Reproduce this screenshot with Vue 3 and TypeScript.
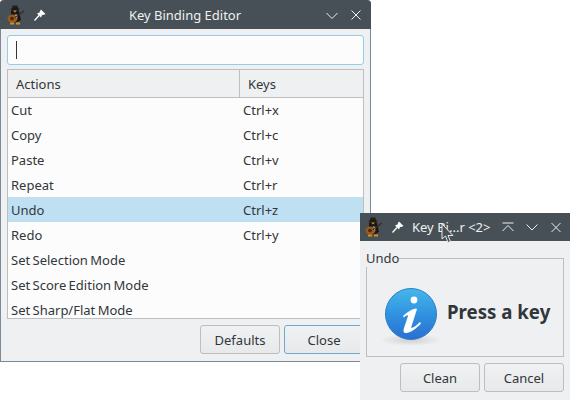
<template>
  <div class="desktop">
    <section class="window editor">
      <header class="titlebar">
        <TuxIcon />
        <PinIcon />
        <span class="title">Key Binding Editor</span>
        <svg class="ctl" width="14" height="14" viewBox="0 0 14 14"><path d="M1.500 5 7 10.500 12.500 5" /></svg>
        <svg class="ctl close" width="14" height="14" viewBox="0 0 14 14"><path d="M2.500 2.500l9 9M11.500 2.500l-9 9" /></svg>
      </header>
      <div class="editor-body">
        <div class="search"><span class="caret"></span></div>
        <div class="table">
          <div class="thead">
            <div class="th actions">Actions</div>
            <div class="th">Keys</div>
          </div>
          <div class="tbody">
            <div
              v-for="row in rows"
              :key="row.action"
              class="row"
              :class="{ selected: row.action === 'Undo' }"
            >
              <span class="action">{{ row.action }}</span>
              <span>{{ row.keys }}</span>
            </div>
          </div>
        </div>
        <footer class="buttons">
          <button class="btn">Defaults</button>
          <button class="btn focused">Close</button>
        </footer>
      </div>
    </section>

    <section class="window prompt">
      <header class="titlebar small">
        <TuxIcon />
        <PinIcon />
        <span class="title-left">Key Bi...r &lt;2&gt;</span>
        <svg class="ctl" width="14" height="14" viewBox="0 0 14 14"><path d="M1.500 3h11M1.500 11 7 5.500 12.500 11" /></svg>
        <svg class="ctl" width="14" height="14" viewBox="0 0 14 14"><path d="M1.500 4.500 7 10l5.500-5.500" /></svg>
        <svg class="ctl" width="14" height="14" viewBox="0 0 14 14"><path d="M2.500 3l9 9M11.500 3l-9 9" /></svg>
      </header>
      <div class="prompt-body">
        <fieldset class="group">
          <legend>Undo</legend>
          <div class="message">
            <svg class="info" width="64" height="64" viewBox="0 0 64 64">
              <defs>
                <linearGradient id="ball" x1="0" y1="0" x2="0" y2="1">
                  <stop offset="0" stop-color="#45b7ea" />
                  <stop offset="0.55" stop-color="#2f8fe0" />
                  <stop offset="1" stop-color="#2a6fd0" />
                </linearGradient>
                <radialGradient id="shade">
                  <stop offset="0" stop-color="#000" stop-opacity="0.14" />
                  <stop offset="1" stop-color="#000" stop-opacity="0" />
                </radialGradient>
              </defs>
              <ellipse cx="32" cy="56" rx="31" ry="6" fill="url(#shade)" />
              <circle cx="32" cy="30" r="25.500" fill="url(#ball)" stroke="#2e7fc8" />
              <ellipse cx="35" cy="16" rx="3.400" ry="3.400" fill="#fff" />
              <path
                d="M24 32C28 28 33 25 37 24.500L38 25 32 44C34 44 38 41 41 38L42 39.500C37 45 31 49 27 49 24.500 49 24 47 25 44L29 32C29 30.500 27 31 25 33.500Z"
                fill="#fff"
              />
            </svg>
            <span class="press">Press a key</span>
          </div>
        </fieldset>
        <footer class="buttons">
          <button class="btn">Clean</button>
          <button class="btn">Cancel</button>
        </footer>
      </div>
      <svg class="cursor" width="13" height="21" viewBox="0 0 13 21">
        <path d="M1 1v15l3.500-3 2.500 6.500 2.500-1-2.500-6H12z" fill="#484f55" stroke="#e8e8e8" />
      </svg>
    </section>
  </div>
</template>

<script setup lang="ts">
import { h } from 'vue';

const rows = [
  { action: 'Cut', keys: 'Ctrl+x' },
  { action: 'Copy', keys: 'Ctrl+c' },
  { action: 'Paste', keys: 'Ctrl+v' },
  { action: 'Repeat', keys: 'Ctrl+r' },
  { action: 'Undo', keys: 'Ctrl+z' },
  { action: 'Redo', keys: 'Ctrl+y' },
  { action: 'Set Selection Mode', keys: '' },
  { action: 'Set Score Edition Mode', keys: '' },
  { action: 'Set Sharp/Flat Mode', keys: '' }
];

// penguin with a guitar
const TuxIcon = () =>
  h('svg', { class: 'tux', width: 18, height: 20, viewBox: '0 0 18 20' }, [
    h('path', { d: 'M4 6q4-3 8 0l2 9q-5 4-10 1z', fill: '#191817' }),
    h('path', { d: 'M3 4.500h10l-2-1.500-.5-2.500h-5L5 3z', fill: '#23201d' }),
    h('ellipse', { cx: 8, cy: 5, rx: 3.500, ry: 2.500, fill: '#1c1a18' }),
    h('path', { d: 'M6 5.500h4l-2 2z', fill: '#d98e1e' }),
    h('ellipse', { cx: 5.500, cy: 13.500, rx: 5, ry: 4, fill: '#9a5a1c' }),
    h('ellipse', { cx: 5, cy: 13.500, rx: 2, ry: 1.700, fill: '#4a2a10' }),
    h('path', { d: 'M8 9.500q2-.5 3 1l-1.500 3z', fill: '#cfc7b2' }),
    h('path', { d: 'M8 12.500 17 6', stroke: '#3a2a1a', 'stroke-width': 1.300 }),
    h('path', { d: 'M3 18.500h4M9 18.500h4', stroke: '#d98e1e', 'stroke-width': 2 })
  ]);

const PinIcon = () =>
  h('svg', { class: 'pin', width: 12, height: 12, viewBox: '0 0 12 12' }, [
    h('path', { d: 'M7 .500 11.500 5 10 5.800 8 6 7 8.500 3 4.500 5.500 3.500 6 2z', fill: '#fff' }),
    h('path', { d: 'M5 6.500.5 11.500', stroke: '#fff', 'stroke-width': 1.300 })
  ]);
</script>

<style>
html,
body {
  margin: 0;
  background: #fff;
}
</style>

<style scoped>
.desktop {
  position: relative;
  width: 570px;
  height: 400px;
  overflow: hidden;
  font-family: "Noto Sans", "Open Sans", sans-serif;
  font-size: 13px;
  color: #31363b;
}

.window {
  position: absolute;
  display: flex;
  flex-direction: column;
  box-sizing: border-box;
  background: #eff0f1;
}

.editor {
  left: 0;
  top: 0;
  width: 371px;
  height: 362px;
  border: 1px solid #7a8a99;
  border-top: 0;
  border-radius: 4px 4px 0 0;
}

.prompt {
  left: 360px;
  top: 213px;
  width: 210px;
  height: 187px;
}

.titlebar {
  display: flex;
  align-items: center;
  flex: none;
  height: 29px;
  margin: 0 -1px;
  padding: 0 8px 0 7px;
  background: #475057;
  color: #eff0f1;
  border-radius: 4px 4px 0 0;
}

.titlebar.small {
  height: 28px;
  margin: 0;
  padding: 0 7px 0 5px;
  border-radius: 0;
}

.tux {
  flex: none;
}

.pin {
  flex: none;
  margin-left: 9px;
}

.title {
  flex: 1;
  text-align: center;
  padding-left: 9px;
}

.title-left {
  flex: 1;
  margin-left: 8px;
  white-space: nowrap;
}

.ctl {
  flex: none;
  margin-left: 10px;
}

.ctl path {
  fill: none;
  stroke: #eff0f1;
  stroke-width: 1;
}

.editor-body {
  display: flex;
  flex-direction: column;
  flex: 1;
  min-height: 0;
  padding: 6px 6px 0;
}

.search {
  display: flex;
  align-items: center;
  flex: none;
  box-sizing: border-box;
  height: 30px;
  padding-left: 8px;
  background: #fcfcfc;
  border: 1px solid #93cee9;
  border-radius: 3px;
}

.caret {
  width: 1px;
  height: 18px;
  background: #31363b;
}

.table {
  display: flex;
  flex-direction: column;
  box-sizing: border-box;
  flex: none;
  height: 250px;
  margin-top: 4px;
  border: 1px solid #bcbebf;
  overflow: hidden;
}

.thead {
  display: flex;
  flex: none;
  box-sizing: border-box;
  height: 28px;
  background: #eff0f1;
  border-bottom: 1px solid #bcbebf;
}

.th {
  flex: 1;
  display: flex;
  align-items: center;
  padding-left: 8px;
}

.th.actions {
  flex: none;
  box-sizing: border-box;
  width: 232px;
  border-right: 1px solid #bcbebf;
}

.tbody {
  flex: 1;
  min-height: 0;
  overflow: hidden;
  background: #fcfcfc;
}

.row {
  display: flex;
  align-items: center;
  height: 25px;
  margin-top: -1px;
  margin-bottom: 1px;
}

.row.selected {
  background: #bfe0f3;
}

.action {
  flex: none;
  width: 235px;
  padding-left: 3px;
  box-sizing: border-box;
  word-spacing: -1px;
}

.buttons {
  display: flex;
  justify-content: flex-end;
  gap: 4px;
  flex: none;
  margin-top: 6px;
}

.btn {
  box-sizing: border-box;
  width: 80px;
  height: 29px;
  padding: 0;
  font: inherit;
  color: inherit;
  background: linear-gradient(#f0f1f2, #e8e9ea);
  border: 1px solid #bcbebf;
  border-radius: 3px;
}

.btn.focused {
  border-color: #6fa8cf;
}

.prompt-body {
  display: flex;
  flex-direction: column;
  flex: 1;
  padding: 0 6px;
}

.group {
  box-sizing: border-box;
  flex: none;
  height: 108px;
  margin: 8px 0 0;
  padding: 0;
  border: 1px solid #bcbebf;
  min-width: 0;
}

.group legend {
  margin-left: -1px;
  padding: 0;
  line-height: 18px;
}

.message {
  display: flex;
  align-items: center;
  box-sizing: border-box;
  height: 89px;
  padding: 8px 0 0 12px;
}

.info {
  flex: none;
}

.press {
  margin: 0 0 9px 4px;
  font-size: 18.67px;
  font-weight: 700;
}

.cursor {
  position: absolute;
  left: 81px;
  top: 10px;
}
</style>
